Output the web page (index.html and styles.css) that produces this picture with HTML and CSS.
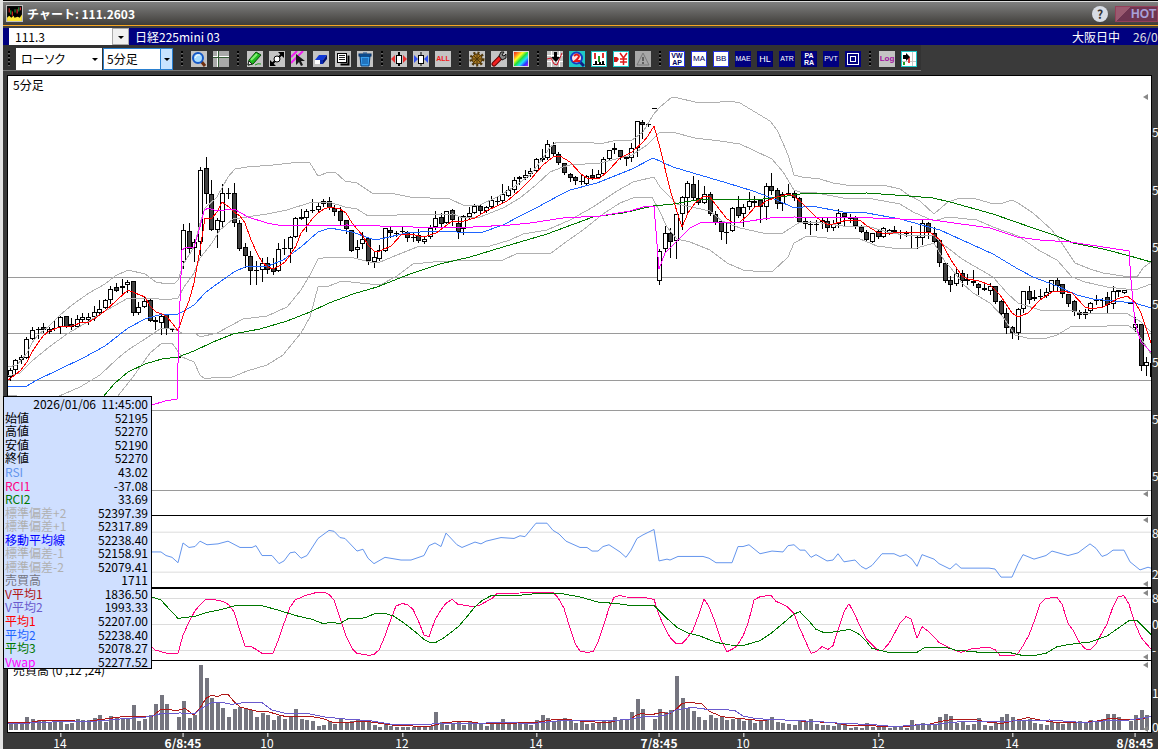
FILE: index.html
```html
<!DOCTYPE html>
<html lang="ja">
<head>
<meta charset="utf-8">
<title>チャート: 111.2603</title>
<link rel="stylesheet" href="styles.css">
</head>
<body>
<div class="window">
  <header class="titlebar">
    <svg class="app-icon" viewBox="0 0 16 16"><rect width="16" height="16" fill="#c0c0c0"/><rect x="1" y="1" width="14" height="14" fill="#000"/><path d="M3 3v4M6 6v4" stroke="#e02020"/><path d="M4.500 5v4M8.500 4v3M12 2v4" stroke="#20a040"/><path d="M10.500 4v4M13.500 2v3" stroke="#f03030"/><path d="M1 15v-3l2-2 2 2 2-2 1 2 3-1 2 1 2-3v6z" fill="#ffe838"/></svg>
    <h1 class="title">チャート: 111.2603</h1>
    <button class="help" type="button">?</button>
    <button class="hot" type="button">HOT</button>
  </header>

  <div class="symbolbar">
    <div class="combo"><input class="combo-input" type="text" value="111.3" aria-label="銘柄コード"><button class="combo-btn" type="button" aria-label="開く"></button></div>
    <span class="symbol-name">日経225mini 03</span>
    <span class="market">大阪日中</span><span class="contract">26/0</span>
  </div>

  <div class="toolbar">
    <i class="grip"></i>
    <span class="pick type"><select aria-label="種類"><option>ローソク</option></select></span>
    <span class="pick period"><select aria-label="足"><option>5分足</option></select></span>
    <i class="grip"></i>
    <button class="tool" type="button" aria-label="拡大"><svg viewBox="0 0 16 16"><path d="M10 10l4 5" stroke="#703010" stroke-width="3"/><circle cx="7" cy="7" r="5" fill="#a8dcff" stroke="#1458c8" stroke-width="2"/><path d="M4 7l2-3 3 0" stroke="#fff" fill="none"/></svg></button>
    <button class="tool dim" type="button" aria-label="十字"><svg viewBox="0 0 16 16"><path d="M0 5.500h16M4.500 0v16" stroke="#fff"/><path d="M0 6.500h16M5.500 0v16" stroke="#355c35"/></svg></button>
    <i class="grip"></i>
    <button class="tool" type="button" aria-label="鉛筆"><svg viewBox="0 0 16 16"><path d="M1 14l1-5 7-8 5 3-8 9z" fill="#20b820" stroke="#064a06"/><path d="M4 9l6-6" stroke="#80f070" stroke-width="2"/><path d="M1 14l1-4 3 3z" fill="#fff" stroke="#222"/><path d="M8 14q3-2 6-1" stroke="#209820" fill="none"/></svg></button>
    <button class="tool" type="button" aria-label="線"><svg viewBox="0 0 16 16"><path d="M2 14L14 2" stroke="#000" stroke-width="2"/><path d="M9 1h6v6zM1 9v6h6z"/><circle cx="8" cy="8" r="3" fill="#fff" stroke="#000"/></svg></button>
    <button class="tool" type="button" aria-label="選択"><svg viewBox="0 0 16 16"><path d="M0 6L6 0M0 12L12 0" stroke="#f020f0" stroke-width="2"/><path d="M5 3v11l3-3 2 4 2-1-2-4h4z" fill="#181818"/></svg></button>
    <button class="tool" type="button" aria-label="消しゴム"><svg viewBox="0 0 16 16"><path d="M6 4h8l-4 5H2z" fill="#1038d8"/><path d="M10 9l4-5v4l-4 5z" fill="#001070"/><path d="M2 9h8v4H2z" fill="#fff"/><path d="M7 9h3v4H7z" fill="#0a28b0"/></svg></button>
    <button class="tool" type="button" aria-label="複写"><svg viewBox="0 0 16 16"><path d="M5.500 13.500h8v-9" fill="none" stroke="#000" stroke-width="2"/><rect x="2.500" y="2.500" width="9" height="9" fill="#fff" stroke="#000"/><path d="M4 4.500h6M4 6.500h6M4 8.500h6" stroke="#222"/></svg></button>
    <button class="tool" type="button" aria-label="削除"><svg viewBox="0 0 16 16"><path d="M3 5h10l-1 10H4z" fill="#38a0f0" stroke="#073a78"/><rect x="2" y="3" width="12" height="2" fill="#1468b8" stroke="#052c60"/><path d="M6 2h4M6 7v6M8 7v6M10 7v6" stroke="#0a4890"/></svg></button>
    <i class="grip"></i>
    <button class="tool" type="button" aria-label="広げる"><svg viewBox="0 0 16 16"><path d="M8 1v14" stroke="#000" stroke-width="2"/><rect x="5.500" y="4.500" width="5" height="8" fill="#fff" stroke="#000"/><path d="M0 8l4-4v8zM16 8l-4-4v8z" fill="#e83030"/></svg></button>
    <button class="tool" type="button" aria-label="縮める"><svg viewBox="0 0 16 16"><path d="M8 1v14" stroke="#000"/><rect x="5.500" y="4.500" width="5" height="8" fill="#fff" stroke="#000"/><path d="M5 8L1 4v8zM11 8l4-4v8z" fill="#3050f0"/></svg></button>
    <button class="tool all" type="button">ALL</button>
    <i class="grip"></i>
    <button class="tool" type="button" aria-label="設定"><svg viewBox="0 0 16 16"><circle cx="8" cy="8" r="6" fill="none" stroke="#503808" stroke-width="3" stroke-dasharray="2 2"/><circle cx="8" cy="8" r="5" fill="#a87820" stroke="#483008"/><path d="M4 8h8M8 4v8M5 5l6 6M11 5l-6 6" stroke="#503808"/></svg></button>
    <button class="tool" type="button" aria-label="工具"><svg viewBox="0 0 16 16"><path d="M3 13l6-6" stroke="#600" stroke-width="5" stroke-linecap="round"/><path d="M3 13l6-6" stroke="#f02020" stroke-width="3" stroke-linecap="round"/><path d="M8 5l2-4 3 0-2 3 2 1 2-2v4l-4 2z" fill="#888" stroke="#111"/></svg></button>
    <button class="tool rainbow" type="button" aria-label="配色"></button>
    <i class="grip"></i>
    <button class="tool" type="button" aria-label="予測"><svg viewBox="0 0 16 16"><path d="M0 4.500h16M0 10.500h16M4.500 0v16M12.500 0v16" stroke="#fff"/><path d="M0 8l4-1 3 6 3 1 5-12" stroke="#d01020" fill="none"/><path d="M7 1h3v5h3l-4 5-5-5h3z"/></svg></button>
    <button class="tool cyan" type="button" aria-label="検索"><svg viewBox="0 0 16 16"><path d="M11 11l4 4" stroke="#102080" stroke-width="3"/><circle cx="7.500" cy="7" r="5.500" fill="#ffe0e0" stroke="#1838c0" stroke-width="2"/><path d="M5 5q3-3 5 0 0 2-4 5h5" stroke="#e01818" stroke-width="2" fill="none"/></svg></button>
    <button class="tool cyan" type="button" aria-label="棒"><svg viewBox="0 0 16 16"><rect x="1" y="1" width="14" height="14" fill="#fff"/><path d="M4 2v6M12 2v5" stroke="#e03030" stroke-width="2"/><path d="M8 5v6" stroke="#209820" stroke-width="2"/><path d="M2 13.500h12" stroke="#000"/><path d="M5 10v3M9 11v2M12 10v3" stroke="#000" stroke-width="2"/></svg></button>
    <button class="tool cyan" type="button" aria-label="円"><svg viewBox="0 0 16 16"><rect x="1" y="1" width="14" height="14" fill="#fff"/><path d="M1 6h3l2 2-2 3H1z" fill="#d01818"/><path d="M7 2l3.500 5L14 2M10.500 6v8M7 8h7M7 11h7" stroke="#e01818" stroke-width="1.500" fill="none"/></svg></button>
    <button class="tool gray" type="button" aria-label="警告"><svg viewBox="0 0 16 16"><path d="M8 2l6 12H2z" fill="none" stroke="#787878"/><path d="M8 6v4M8 11v2" stroke="#606060" stroke-width="2"/></svg></button>
    <i class="grip"></i>
    <button class="tool ind light two" type="button">VW<br>AP</button>
    <button class="tool ind light" type="button">MA</button>
    <button class="tool ind light" type="button">BB</button>
    <button class="tool ind small" type="button">MAE</button>
    <button class="tool ind" type="button">HL</button>
    <button class="tool ind small" type="button">ATR</button>
    <button class="tool ind two" type="button">PA<br>RA</button>
    <button class="tool ind small" type="button">PVT</button>
    <button class="tool ind frame" type="button" aria-label="枠"><svg viewBox="0 0 16 16"><rect x="2.500" y="2.500" width="11" height="11" fill="none" stroke="#fff"/><rect x="5.500" y="5.500" width="5" height="5" fill="none" stroke="#fff"/></svg></button>
    <i class="grip"></i>
    <button class="tool log" type="button">Log</button>
    <button class="tool cyan" type="button" aria-label="移動"><svg viewBox="0 0 16 16"><rect x="1" y="1" width="14" height="14" fill="#fff"/><path d="M1 10.500h14M11.500 1v14" stroke="#c8c8c8"/><path d="M8 6v6" stroke="#e04040" stroke-width="2"/><path d="M3 11v3" stroke="#20a020" stroke-width="2"/><path d="M2 4h3V2l4 4-4 4V8H2z"/></svg></button>
  </div>

  <main class="chart">
    <section class="pane price">
      <div class="plot">
        <svg viewBox="8 76 1143 439" preserveAspectRatio="none">
          <g class="level"><path d="M8 277.500H1151M8 333.500H1151M8 380.500H1151M8 410.500H1151M8 490.500H1151"/></g>
          <g id="candles"></g>
          <g class="band">
            <polyline points="8,367 17,365 27,353 32,343 38,335 49,326 60,315 72,305 89,293 105,284 115,276 128,270 145,274 156,282 167,284 175,283 178,280 184,263 194,247 200,223 205,208 217,197 228,177 235,169 247,167 273,165 300,162 310,163 318,176 329,172 335,172 345,181 357,183 372,193 390,193 410,197 450,199 465,206 480,205 497,197 514,187 531,174 543,158 550,147 557,142 587,142 600,144 617,140 632,140 643,132 653,115 660,107 672,97 678,98 695,102 710,103 730,101 740,103 755,112 770,121 777,130 783,143 788,155 794,175 802,177 820,179 833,183 853,186 883,185 900,189 907,194 920,201 934,214 948,202 957,199 973,198 990,203 1003,203 1012,200 1018,203 1033,213 1052,230 1063,245 1075,263 1090,269 1103,273 1123,276 1137,277 1143,268 1151,262"/>
            <polyline points="8,376 20,373 32,361 49,347 67,334 89,321 107,310 128,298 150,298 167,300 178,298 184,287 194,273 200,258 212,243 220,230 233,219 267,214 287,210 312,202 329,202 345,207 357,209 368,216 397,215 453,214 463,218 480,217 503,208 520,198 536,185 550,172 563,167 570,165 600,163 632,155 647,145 659,133 672,132 695,138 720,141 740,144 753,150 772,159 783,172 794,190 800,192 817,193 843,198 873,199 900,204 913,212 934,221 948,217 977,220 993,227 1018,236 1040,251 1057,260 1072,277 1085,282 1107,287 1135,290 1151,284"/>
            <polyline points="8,395 17,396 30,400 57,397 80,387 100,375 117,359 128,350 145,339 160,329 172,328 182,333 195,333 200,337 217,333 243,319 267,316 287,307 301,290 310,275 318,259 329,257 350,257 370,262 380,262 397,255 417,247 443,246 490,246 510,240 523,234 547,230 570,220 593,207 617,191 633,182 654,177 660,187 677,204 710,211 722,221 740,228 763,233 783,233 800,222 813,222 843,226 867,226 887,232 910,236 934,235 940,242 948,248 962,259 993,277 1007,293 1018,303 1040,310 1070,310 1080,313 1128,314 1141,322 1151,332"/>
            <polyline points="117,397 133,377 150,353 162,343 172,343 182,357 194,362 200,375 205,379 217,377 230,378 247,371 267,365 283,355 301,333 310,317 318,287 329,286 342,281 360,283 380,285 397,276 413,264 433,262 470,260 503,260 518,253 550,254 563,244 583,230 603,214 620,203 633,198 652,197 660,212 667,227 677,239 690,242 710,250 727,263 743,270 763,272 773,271 788,257 794,243 807,236 827,238 860,239 877,246 900,249 917,248 934,243 945,262 951,268 962,283 973,293 990,303 1003,317 1015,335 1027,338 1047,338 1057,335 1072,326 1087,327 1128,325 1137,332 1151,354"/>
          </g>
          <polyline class="slow" points="103,397 115,383 128,372 145,364 162,359 178,357 194,351 213,342 233,334 260,329 287,321 310,312 329,303 353,294 377,287 410,274 440,264 470,257 503,247 547,234 593,217 623,213 653,206 673,204 703,199 763,199 787,196 800,194 867,193 909,196 933,198 950,202 993,214 1033,228 1057,236 1073,243 1103,249 1130,256 1151,262"/>
          <polyline class="mid" points="8,386 27,386 37,380 60,369 83,358 105,346 128,328 145,319 162,314 178,314 184,311 194,305 205,293 217,284 234,272 245,267 268,266 283,260 301,247 318,232 330,228 352,232 372,239 380,239 407,233 433,231 447,231 467,233 483,232 503,225 520,216 536,208 560,195 570,190 597,183 632,169 653,158 673,167 693,173 727,183 753,191 777,200 794,208 812,206 843,212 867,213 900,219 940,230 962,240 993,254 1018,269 1033,277 1057,286 1077,295 1093,299 1113,301 1135,303 1151,308"/>
          <polyline class="fast" points="8,380 15,375 21,370 27,362 32,352 38,343 43,336 49,331 60,327 72,326 83,322 89,322 97,317 105,311 117,300 128,290 135,293 145,297 150,306 156,312 162,314 167,317 173,324 178,331 184,313 189,301 194,283 200,250 205,218 212,218 217,212 222,202 229,207 234,212 240,216 245,223 251,240 257,253 262,262 268,267 273,269 279,266 285,262 290,255 296,246 301,233 307,226 313,218 318,213 324,209 330,207 340,209 346,213 352,223 363,236 368,245 374,251 380,251 391,246 402,234 410,234 424,237 436,233 447,225 452,221 464,221 475,218 486,211 497,206 507,201 520,190 531,179 543,165 553,157 560,156 570,162 581,174 587,178 600,178 609,170 620,158 632,152 643,142 648,136 654,126 660,148 671,193 682,227 688,213 695,203 704,196 710,197 716,205 727,219 732,222 740,222 747,216 755,207 760,206 766,201 777,197 788,194 794,196 803,204 817,218 827,224 833,224 847,220 860,220 867,226 877,232 887,234 900,232 913,233 930,232 940,240 951,260 962,276 968,279 979,281 990,285 1000,295 1012,313 1018,317 1028,313 1040,300 1052,292 1063,291 1072,293 1085,307 1092,309 1103,307 1117,299 1127,296 1135,302 1141,313 1151,343"/>
          <polyline class="vwap" points="152,405 165,401 177,399 179,327 182,250 187,247 194,247 200,227 204,211 208,208 217,211 234,209 248,217 267,223 283,226 347,225 413,227 473,227 510,225 530,223 563,218 600,216 630,211 643,207 654,206 659,269 665,253 673,245 682,236 690,228 700,223 720,222 743,222 770,218 794,217 873,218 900,219 933,220 947,222 990,228 1017,237 1040,240 1070,242 1090,245 1129,251 1131,280 1135,323 1141,342 1151,352"/>
        </svg>
        <span class="pane-name">5分足</span>
        <i class="mark top"></i><i class="mark bottom"></i>
      </div>
      <div class="scale"><span style="top:13%">5</span><span style="top:26%">5</span><span style="top:39%">5</span><span style="top:52%">5</span><span style="top:65%">5</span><span style="top:78%">5</span><span style="top:91%">5</span></div>
    </section>

    <section class="pane rsi">
      <div class="plot">
        <svg viewBox="8 518 1143 79" preserveAspectRatio="none">
          <path class="grid" d="M8 536H1151M8 580.500H1151"/>
          <polyline class="rsi-line" points="152,558 161,558 166,562 172,564 178,570 183,548 189,553 195,552 200,546 207,550 218,549 228,546 240,553 252,553 256,551 262,562 272,562 279,571 284,568 290,559 295,558 301,565 307,562 318,543 329,534 334,535 340,542 345,543 357,557 363,555 368,565 374,571 385,564 401,567 411,567 424,562 429,551 435,548 441,552 446,537 457,550 462,553 475,547 481,549 486,546 501,542 514,543 520,540 525,541 536,526 547,526 553,534 559,538 566,546 580,553 587,553 592,557 598,557 603,552 609,550 620,558 626,564 631,556 637,543 643,539 654,533 659,568 667,566 670,567 678,563 703,563 709,565 716,570 732,570 738,552 743,552 749,550 760,560 772,557 783,558 788,551 794,550 800,556 805,556 811,564 816,561 827,568 833,567 838,560 844,569 855,567 861,574 866,577 872,573 882,560 894,560 900,563 906,561 912,566 917,574 922,561 934,566 939,571 950,577 956,571 961,576 989,576 995,577 1001,586 1012,586 1018,571 1023,561 1034,566 1046,562 1052,557 1068,562 1078,559 1090,549 1096,554 1102,563 1107,561 1113,556 1124,556 1130,569 1140,578 1148,575 1151,576"/>
        </svg>
        <i class="mark top"></i><i class="mark bottom"></i>
      </div>
      <div class="scale"><span style="top:23%">8</span><span style="top:79%">2</span></div>
    </section>

    <section class="pane rci">
      <div class="plot">
        <svg viewBox="8 267 1143 213" preserveAspectRatio="none">
          <path class="grid" d="M8 295H1151M8 373H1151M8 451H1151"/>
          <polyline class="rci-short" points="152,442 155,450 167,460 178,460 183,405 190,360 195,332 200,315 206,298 212,298 223,304 229,315 234,335 240,393 245,438 251,440 256,448 262,460 273,460 279,415 284,370 290,322 295,300 306,286 317,277 325,277 329,283 334,300 340,355 346,408 352,445 357,460 369,466 374,463 379,450 385,408 390,365 396,318 402,311 407,313 413,328 418,360 424,405 429,410 435,360 441,330 446,310 452,298 458,313 474,320 480,315 486,305 492,295 497,281 520,279 530,277 553,277 558,293 564,325 569,375 575,430 580,453 587,457 593,455 598,425 604,372 609,325 614,292 620,286 626,291 643,292 654,298 659,345 665,385 670,412 676,430 682,430 687,415 693,390 698,350 704,297 709,320 715,365 721,420 727,455 732,448 737,438 743,408 748,370 754,300 760,290 771,286 776,304 787,319 794,340 799,380 805,420 811,460 816,455 822,440 828,448 833,437 838,390 844,335 849,311 855,345 861,385 866,415 872,433 878,452 883,450 889,430 900,370 906,350 911,356 917,415 922,380 928,393 939,427 950,445 961,457 972,446 989,442 995,449 1000,466 1013,468 1018,460 1023,437 1029,405 1034,365 1040,312 1046,295 1057,292 1062,312 1068,370 1073,390 1079,425 1085,446 1090,450 1096,432 1102,398 1107,372 1113,320 1118,290 1124,287 1129,313 1135,370 1141,412 1146,430 1151,447"/>
          <polyline class="slow" points="152,291 161,300 170,330 178,355 195,349 206,338 222,328 234,318 246,316 262,317 280,332 296,347 312,358 324,372 330,366 340,371 348,356 353,354 357,357 365,353 374,342 384,340 393,347 402,365 413,390 424,418 430,427 436,427 444,413 452,395 459,378 467,350 475,320 482,302 491,287 515,287 536,281 560,280 580,291 598,306 617,311 632,317 654,317 665,350 677,382 687,398 700,408 716,427 730,435 744,436 760,422 771,400 783,370 794,342 800,335 811,370 816,388 825,399 838,394 850,388 858,400 866,423 872,445 888,457 917,457 924,444 945,441 955,450 980,457 1010,458 1022,466 1035,466 1046,460 1057,440 1070,433 1090,426 1107,408 1118,385 1129,362 1137,361 1145,385 1151,404"/>
        </svg>
        <i class="mark top"></i><i class="mark bottom"></i>
      </div>
      <div class="scale"><span style="top:12%">8</span><span style="top:49%">0</span><span style="top:85%">-</span></div>
    </section>

    <section class="pane volume">
      <div class="plot">
        <svg viewBox="8 483 1143 213" preserveAspectRatio="none">
          <g id="bars"></g>
          <polyline class="vol-short" points="8,667 30,667 40,662 70,662 85,665 110,655 125,649 152,649 161,628 178,631 185,625 194,645 201,620 206,595 211,587 218,589 222,583 228,583 234,605 240,621 256,633 267,634 279,645 285,649 312,650 322,655 334,668 345,669 363,663 374,667 396,677 430,679 445,667 467,664 485,672 500,670 535,668 553,659 564,657 580,663 600,667 610,667 617,661 630,657 637,645 642,640 650,645 662,637 669,642 676,628 682,610 690,607 702,612 710,635 722,650 745,657 762,662 772,658 785,660 806,664 833,668 850,677 861,675 885,680 905,681 917,674 930,672 944,662 955,658 975,659 990,668 1003,670 1017,660 1028,653 1040,660 1055,667 1080,669 1100,662 1110,655 1125,659 1140,657 1151,650"/>
          <polyline class="vol-long" points="8,669 30,669 60,665 90,665 120,657 150,650 162,640 180,639 195,640 202,625 212,607 222,607 232,613 245,607 262,608 272,630 285,640 308,641 325,651 345,657 370,662 390,672 410,675 440,671 460,671 500,668 535,670 560,662 575,661 590,662 610,663 630,657 642,651 665,647 676,630 692,622 712,630 722,628 735,632 743,648 756,656 785,660 820,665 845,671 870,673 895,680 920,674 940,672 960,665 1000,664 1050,660 1085,668 1107,662 1130,660 1151,650"/>
        </svg>
        <span class="pane-name">売買高 (0 ,12 ,24)</span>
        <i class="mark top"></i><i class="mark bottom"></i>
      </div>
      <div class="scale"><span style="top:45%">1</span><span style="top:92%">0</span></div>
    </section>

    <div class="time-axis" id="time-axis"></div>

    <table class="readout">
      <tbody>
        <tr><td colspan="2">2026/01/06&nbsp; 11:45:00</td></tr>
        <tr><th>始値</th><td>52195</td></tr>
        <tr><th>高値</th><td>52270</td></tr>
        <tr><th>安値</th><td>52190</td></tr>
        <tr><th>終値</th><td>52270</td></tr>
        <tr class="c-rsi"><th>RSI</th><td>43.02</td></tr>
        <tr class="c-rci"><th>RCI1</th><td>-37.08</td></tr>
        <tr class="c-green"><th>RCI2</th><td>33.69</td></tr>
        <tr class="c-band"><th>標準偏差+2</th><td>52397.39</td></tr>
        <tr class="c-band"><th>標準偏差+1</th><td>52317.89</td></tr>
        <tr class="c-navy"><th>移動平均線</th><td>52238.40</td></tr>
        <tr class="c-band"><th>標準偏差-1</th><td>52158.91</td></tr>
        <tr class="c-band"><th>標準偏差-2</th><td>52079.41</td></tr>
        <tr class="c-vol"><th>売買高</th><td>1711</td></tr>
        <tr class="c-v1"><th>V平均1</th><td>1836.50</td></tr>
        <tr class="c-v2"><th>V平均2</th><td>1993.33</td></tr>
        <tr class="c-red"><th>平均1</th><td>52207.00</td></tr>
        <tr class="c-blue"><th>平均2</th><td>52238.40</td></tr>
        <tr class="c-green"><th>平均3</th><td>52078.27</td></tr>
        <tr class="c-vwap"><th>Vwap</th><td>52277.52</td></tr>
      </tbody>
    </table>
  </main>
</div>
<script src="chart.js"></script>
</body>
</html>
```

FILE: styles.css
```css
* { box-sizing: border-box; }
body { margin: 0; font: 12px/14px "Noto Sans CJK JP", sans-serif; color: #000; background: #e4e4e4; overflow: hidden; }
.window { height: 100vh; margin-left: 3px; display: flex; flex-direction: column; background: #3a3a3a; border-top: 1px solid #000; }
button, input, select { font: inherit; margin: 0; padding: 0; border: 0; border-radius: 0; }
svg { display: block; }

.titlebar { flex: none; height: 27px; display: flex; align-items: center; padding: 0 0 1px 3px; background: linear-gradient(#808080, #3c3a36); border-top: 1px solid #ddd; border-bottom: 2px solid #404040; box-shadow: inset 0 -1px #f5a623; overflow: hidden; }
.app-icon { flex: none; width: 17px; height: 17px; }
.title { margin: 0 auto 0 4px; font-size: 12px; line-height: 14px; font-weight: 700; color: #fff; white-space: nowrap; }
.help { flex: none; width: 16px; height: 16px; margin-right: 7px; border-radius: 50%; background: #d8dce4; color: #333; font-weight: 700; line-height: 14px; }
.hot { flex: none; width: 43px; height: 16px; padding-left: 15px; background: linear-gradient(135deg, #9a5a70 10px, #6e3450 10px); border: 1px solid #95405a; color: #a8a0d8; font: 700 12px/14px "Liberation Sans", sans-serif; text-align: left; white-space: nowrap; overflow: hidden; }

.symbolbar { flex: none; height: 17px; display: flex; align-items: center; padding-left: 6px; background: #000080; color: #fff; white-space: nowrap; overflow: hidden; }
.combo { flex: none; width: 120px; height: 17px; display: flex; background: #fff; }
.combo-input { flex: 1; min-width: 0; padding-left: 6px; background: #fff; }
.combo-btn { position: relative; width: 17px; background: #f0f0f0; border: 1px solid #aaa; }
.combo-btn::after, .pick::after { content: ""; position: absolute; right: 4px; top: 50%; margin-top: -1px; border: 3px solid transparent; border-top: 3px solid #000; border-bottom: 0; }
.symbol-name { margin: 0 auto 0 6px; }
.market { flex: none; margin-right: 13px; }
.contract { flex: none; width: 25px; color: #e0e0e0; overflow: hidden; }

.toolbar { flex: none; align-self: flex-start; height: 26px; display: flex; align-items: center; gap: 6px; padding: 2px 4px 0 3px; background: #333; border-bottom: 1px solid #777; }
.grip { flex: none; width: 6px; height: 15px; background: repeating-linear-gradient(#000 0 2px, #666 2px 3px, transparent 3px 4px) center / 2px 100% no-repeat; }
.pick { flex: none; position: relative; height: 22px; }
.pick select { width: 100%; height: 22px; padding-left: 5px; background: #fff; color: #000; appearance: none; font-feature-settings: "palt"; }
.pick.type { width: 86px; margin-left: -2px; }
.pick.period { width: 70px; margin-left: -5px; }
.pick.period select { padding-left: 3px; border: 1px solid #2a80d0; background: linear-gradient(90deg, #fff calc(100% - 12px), #2a80d0 calc(100% - 12px) calc(100% - 11px), #c8e4ff 0); }
.pick.period::after { right: 3px; }
.tool { flex: none; width: 16px; height: 16px; background: #c4c4c4; text-align: center; overflow: hidden; white-space: nowrap; font: 700 8px/16px "Liberation Sans", sans-serif; }
.tool svg { width: 100%; height: 100%; }
.dim { background: #aaa; }
.gray { background: #a8a8a8; }
.all { color: #f01818; font-size: 7px; }
.cyan { background: #20c8c8; }
.rainbow { border: 1px solid #ddd; background: linear-gradient(135deg, #f02020, #ff8020, #ffff20, #20e040, #20e0ff, #3030ff, #c020f0); }
.ind { background: #000080; color: #fff; border: 1px solid #00006a; font-size: 9px; line-height: 14px; font-weight: 400; }
.ind.light { background: #fff; color: #000060; border: 1px solid #2430e0; font-size: 8px; }
.ind.small { font-size: 7px; border: 0; }
.ind.two { font-size: 7px; line-height: 7px; font-weight: 700; }
.ind.frame { border: 0; }
.log { color: #a010a0; }

.chart { flex: 1; min-height: 0; position: relative; display: flex; flex-direction: column; margin-top: 4px; }
.pane { display: flex; min-height: 0; }
.price { flex: 441 1 0; }
.rsi { flex: 73 1 0; }
.rci, .volume { flex: 72 1 0; }
.plot { flex: 1; min-width: 0; position: relative; margin-left: 4px; background: #fff; border: 1px solid #000; border-top: 0; }
.price .plot { border-top: 1px solid #000; }
.rsi .plot { border-bottom-width: 2px; }
.plot svg { position: absolute; inset: 0; width: 100%; height: 100%; shape-rendering: crispEdges; }
.plot polyline, .plot path { fill: none; stroke-width: 1px; vector-effect: non-scaling-stroke; }
.level path { stroke: #9a9a9a; }
.plot .grid { stroke: #dcdcdc; }
.band { stroke: #b0b0b0; }
.slow { stroke: #007800; }
.mid { stroke: #1e64ff; }
.fast { stroke: #ff0000; }
.vwap { stroke: #ff00ff; }
.rsi-line { stroke: #6495ed; }
.rci-short { stroke: #ff0080; }
.vol-short { stroke: #b01818; }
.vol-long { stroke: #6a5acd; }
.wick { fill: #000; }
.up { fill: #fff; stroke: #000; }
.down { fill: #404040; stroke: #000; }
.bar { fill: #75757f; }
.pane-name { position: absolute; left: 5px; top: 2px; white-space: nowrap; }
.mark { position: absolute; right: 3px; border: 3px solid transparent; border-right: 5px solid #888; border-left: 0; }
.mark.top { top: 1px; }
.mark.bottom { bottom: 0; }
.price .mark.top { top: 18px; }
.price .mark.bottom { bottom: 18px; }
.scale { flex: none; width: 6px; position: relative; overflow: hidden; color: #fff; }
.scale span { position: absolute; left: 0; transform: translateY(-50%); }

.time-axis { flex: none; position: relative; height: 16px; margin: 0 7px 0 5px; color: #fff; }
.tick { position: absolute; top: 0; transform: translateX(-50%); padding-top: 4px; line-height: 12px; white-space: nowrap; }
.tick::before { content: ""; position: absolute; left: 50%; top: 0; width: 1px; height: 4px; background: #fff; }
.tick.day { font-weight: 700; }

.readout { position: absolute; left: 0; bottom: 80px; width: 149px; height: 273px; border: 1px solid #000; border-collapse: separate; border-spacing: 0; background: #cfdfff; }
.readout th, .readout td { padding: 0 3px 0 1px; line-height: 13px; font-weight: 400; text-align: left; white-space: nowrap; }
.readout td { color: #000; text-align: right; }
.c-rsi { color: #6495ed; }
.c-rci { color: #ff0080; }
.c-green { color: #007800; }
.c-band { color: #b0b0b0; }
.c-navy { color: #0000ff; }
.c-vol { color: #75757f; }
.c-v1 { color: #b01818; }
.c-v2 { color: #6a5acd; }
.c-red { color: #ff0000; }
.c-blue { color: #1e64ff; }
.c-vwap { color: #ff00ff; }
```

FILE: chart.js
```js
const NS = "http://www.w3.org/2000/svg";
const FIRST = -31;
const center = k => Math.floor(183.6 + 5.6 * k);

function rect(parent, cls, x, y, w, h) {
  const r = document.createElementNS(NS, "rect");
  r.setAttribute("class", cls);
  r.setAttribute("x", x);
  r.setAttribute("y", y);
  r.setAttribute("width", w);
  r.setAttribute("height", h);
  parent.appendChild(r);
}

// body top, body bottom, high, low, u = rising / d = falling
const candles = `370,377,368,380u 360,370,359,373u 357,360,355,363u 339,358,337,358u 330,339,327,339u 329,330,327,338d 327,330,323,332d 329,332,327,333u 328,328,320,330d 317,327,316,333u
316,327,316,327d 324,327,318,329d 319,327,315,327u 317,320,313,322u 317,320,313,324u 312,317,306,320u 309,313,300,314u 300,308,299,308u 289,300,286,303u 287,291,283,291d
286,288,279,293u 282,285,280,292u 281,313,281,315d 307,313,302,314u 301,307,296,307u 300,321,299,321d 320,322,317,329d 316,323,313,334u 314,329,314,334d 329,330,329,331d 357,357,357,357d
230,262,224,268u 231,249,223,253d 242,248,239,261u 170,242,167,255u 168,194,157,203d 194,230,180,230d 220,230,218,247u 193,222,184,227u 193,193,188,198d 193,223,183,226d
223,249,220,250d 247,256,243,267d 256,271,251,284d 270,270,261,284d 263,270,258,281u 263,270,257,273d 268,272,258,274d 249,271,243,271u 248,249,239,254d 237,249,236,262u
218,237,217,237u 217,219,209,219d 211,218,209,231u 210,211,199,212d 206,210,202,211u 201,204,199,206u 201,208,197,209d 208,212,205,215d 211,221,207,224d 220,229,220,233d
230,251,230,251d 247,250,240,258u 239,244,232,248u 238,261,238,264d 257,262,252,267u 250,259,245,260u 228,251,228,251u 230,233,227,237d 233,233,231,236d 231,232,226,232d
232,238,231,241d 237,237,233,241d 235,241,229,242d 239,242,237,243u 228,237,225,238u 218,227,211,229u 217,224,213,227d 211,223,211,223u 210,220,209,225d 223,232,217,238d
216,229,215,234u 213,217,207,219u 206,213,204,213u 206,211,204,213d 207,211,206,212u 200,207,196,207u 201,201,197,205d 194,201,184,202u 190,196,186,196u 180,190,177,192u
177,179,176,184d 175,178,170,179u 171,174,168,176u 159,171,158,171u 158,160,149,161u 144,158,140,159u 145,154,142,155d 154,163,152,164d 163,173,163,174d 174,178,173,181d
177,181,176,184d 181,182,174,184d 176,184,175,185u 175,178,169,179d 174,178,170,178u 159,174,157,175u 150,159,150,160u 148,150,143,153u 150,157,150,159d 157,159,157,165d
148,158,143,161u 121,148,121,156u 122,125,120,138d 124,124,123,126d 108,108,108,108d 251,281,249,284u 233,249,226,252u 233,242,228,257d 214,241,214,258u 197,214,196,229u
183,198,181,214u 184,198,176,200d 198,203,180,204d 194,203,186,203u 194,214,192,215d 214,223,211,224d 221,232,220,239d 232,232,223,243d 208,231,207,231u 207,216,196,217d
207,214,204,226u 201,207,192,209u 201,203,196,207u 200,207,199,222d 186,207,183,219u 186,191,173,194d 190,204,188,208d 194,204,192,210u 193,195,184,195u 193,198,191,200d
198,222,197,222d 221,224,218,228d 224,224,221,234d 224,224,220,230d 220,222,217,228u 221,228,217,231d 224,228,220,230u 213,224,209,227u 213,217,212,225d 218,219,214,222d
217,226,216,228d 227,232,225,232d 232,240,230,241d 233,242,233,242u 231,237,230,238d 228,237,227,237u 230,233,229,234u 230,232,226,233u 232,233,230,238d 232,234,231,236d
235,236,226,248d 237,238,235,248d 223,238,220,244u 223,232,222,238d 233,242,227,242d 240,263,239,266d 263,281,262,282d 280,285,276,291d 273,284,268,285u 273,281,270,286d
279,281,274,284u 281,283,270,285d 284,288,283,294d 288,290,283,290d 286,291,283,294u 286,302,286,303d 301,314,300,315d 313,328,308,333d 327,333,326,338d 309,333,308,339u
291,309,291,312u 291,300,286,303d 297,299,290,300u 296,297,289,299u 292,296,288,297u 280,292,280,292u 280,286,278,290d 284,294,284,297d 294,304,294,306d 301,312,300,315d
312,315,310,318d 312,315,309,318u 303,311,302,312u 300,301,295,304d 300,301,298,306d 297,305,292,313d 291,304,286,308u 290,292,290,296d 290,293,290,293u 303,303,303,303d
324,328,317,331u 324,366,324,370d 362,366,357,375u 363,377,363,377d`.split(/\s+/);

const candleLayer = document.getElementById("candles");
candles.forEach((c, i) => {
  const [top, bottom, high, low] = c.slice(0, -1).split(",").map(Number);
  const x = center(FIRST + i);
  rect(candleLayer, "wick", x, high, 1, low - high + 1);
  if (bottom - top < 2) rect(candleLayer, "wick", x - 2, top, 5, 1);
  else rect(candleLayer, c.endsWith("u") ? "up" : "down", x - 1.5, top + 0.5, 4, bottom - top - 1);
});

// top edge of each volume bar; 690 is the baseline
const volume = [667, 668, 668, 651, 657, 660, 662, 667, 665, 660, 672, 668, 657, 660, 661, 655, 645, 666, 648, 655, 657, 658, 615, 663, 657, 645, 612, 585, 612, 690, 651,
  603, 655, 645, 495, 534, 595, 606, 624, 651, 627, 621, 627, 630, 651, 639, 645, 660, 647, 657, 651, 627, 657, 660, 663, 678, 675, 663, 672, 657, 668,
  663, 660, 664, 666, 675, 681, 669, 678, 682, 680, 681, 681, 682, 680, 678, 636, 666, 675, 669, 665, 675, 663, 669, 670, 678, 673, 672, 657, 672, 667,
  666, 669, 675, 660, 645, 654, 665, 657, 655, 663, 668, 663, 672, 669, 668, 663, 660, 651, 661, 657, 636, 597, 627, 690, 657, 627, 636, 630, 528, 594,
  624, 633, 651, 660, 645, 654, 647, 660, 657, 657, 663, 658, 669, 663, 660, 652, 666, 670, 672, 675, 661, 667, 657, 672, 675, 675, 678, 670, 673, 684,
  681, 684, 670, 681, 675, 675, 684, 681, 681, 684, 660, 675, 670, 672, 675, 651, 642, 648, 669, 667, 675, 672, 654, 675, 678, 669, 651, 642, 651, 657,
  660, 657, 669, 673, 675, 665, 669, 672, 667, 669, 663, 669, 660, 663, 658, 642, 642, 651, 690, 663, 645, 630, 645, 567];

const barLayer = document.getElementById("bars");
volume.forEach((top, i) => rect(barLayer, "bar", center(FIRST + i) - 1, top, 4, 690 - top));

const axis = document.getElementById("time-axis");
[[-22, "14"], [0, "6/8:45", 1], [15, "10"], [39, "12"], [63, "14"], [85, "7/8:45", 1], [100, "10"], [124, "12"], [148, "14"], [170, "8/8:45", 1]].forEach(([k, label, day]) => {
  const tick = document.createElement("span");
  tick.className = day ? "tick day" : "tick";
  tick.textContent = label;
  tick.style.left = ((center(k) - 8) / 1143 * 100).toFixed(2) + "%";
  axis.appendChild(tick);
});
```
